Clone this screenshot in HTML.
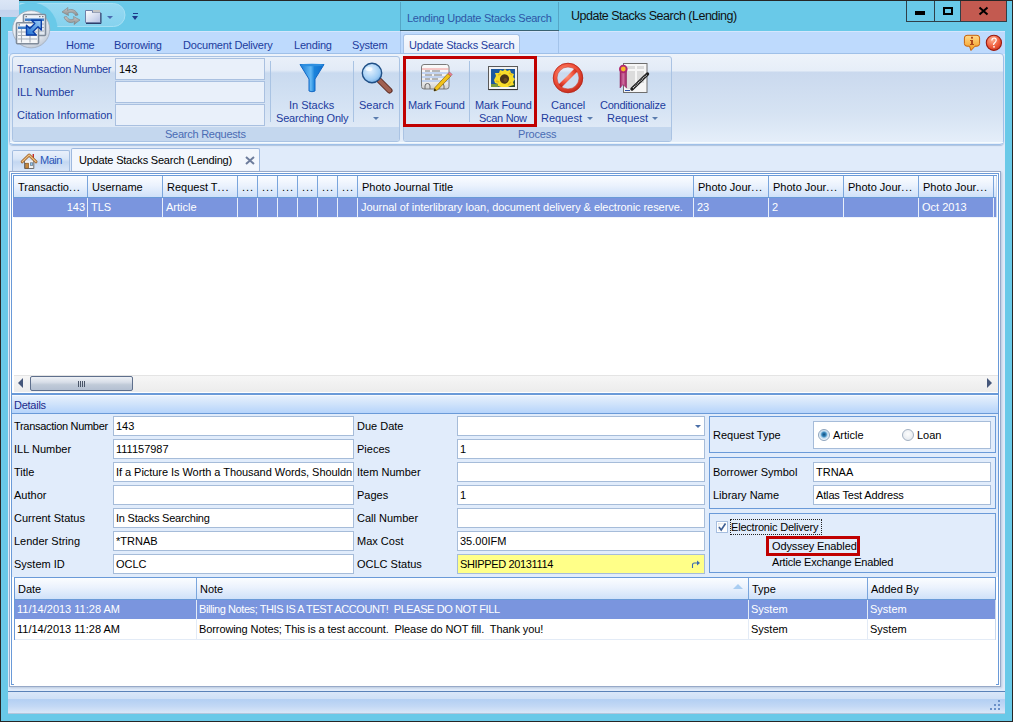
<!DOCTYPE html>
<html><head><meta charset="utf-8">
<style>
*{box-sizing:border-box;margin:0;padding:0}
html,body{width:1013px;height:722px;overflow:hidden}
body{position:relative;background:#69c9e8;font-family:"Liberation Sans",sans-serif;font-size:11px;color:#000}
.a{position:absolute}
.t{position:absolute;white-space:nowrap;line-height:13px}
svg{position:absolute;overflow:visible}
</style></head><body>
<div class="a" style="left:0px;top:0px;width:19px;height:17px;background:linear-gradient(#dbe6f6 0,#d3e0f3 55%,#c2d3ee 60%,#c6d6ef)"></div>
<div class="a" style="left:19px;top:0px;width:994px;height:1px;background:#262626"></div>
<div class="a" style="left:0px;top:17px;width:1px;height:705px;background:#262626"></div>
<div class="a" style="left:1012px;top:0px;width:1px;height:722px;background:#262626"></div>
<div class="a" style="left:0px;top:721px;width:1013px;height:1px;background:#262626"></div>
<div class="t" style="left:571px;top:8px;font-size:12.5px;line-height:16px;letter-spacing:-0.5px;color:#111">Update Stacks Search (Lending)</div>
<div class="a" style="left:400px;top:30px;width:159px;height:1px;background:#3a6272"></div>
<div class="t" style="left:407px;top:12px;letter-spacing:-0.25px;color:#2d56a6">Lending Update Stacks Search</div>
<div class="a" style="left:906px;top:1px;width:101px;height:21px;border:1px solid #2f3f48;border-top:none;background:#69c9e8"></div>
<div class="a" style="left:934px;top:1px;width:1px;height:20px;background:#2f3f48"></div>
<div class="a" style="left:960px;top:1px;width:46px;height:20px;background:#c35a50"></div>
<div class="a" style="left:960px;top:1px;width:1px;height:20px;background:#2f3f48"></div>
<div class="a" style="left:915px;top:11px;width:10px;height:4px;background:#000"></div>
<div class="a" style="left:943px;top:7px;width:10px;height:8px;border:2px solid #000"></div>
<svg style="left:978px;top:6px" width="11" height="10" viewBox="0 0 11 10"><path d="M1.5 1.5 L9.5 8.5 M9.5 1.5 L1.5 8.5" stroke="#000" stroke-width="2"/></svg>
<div class="a" style="left:8px;top:31px;width:997px;height:683px;background:#e0ebfa"></div>
<div class="a" style="left:8px;top:31px;width:997px;height:23px;background:#bedafd;border-top:1px solid #d4e6fd"></div>
<svg style="left:19px;top:1px;overflow:hidden" width="121" height="30" viewBox="19 1 121 30"><defs><linearGradient id="pill" x1="0" y1="0" x2="0" y2="1"><stop offset="0" stop-color="#96d9f2"/><stop offset="1" stop-color="#86d2ee"/></linearGradient></defs><path d="M20 3.5 H113.5 A11.5 11.5 0 0 1 113.5 26.5 H20 Z" fill="url(#pill)" stroke="#a6e0f4" stroke-width="1"/><circle cx="31" cy="29" r="26.5" fill="#69c9e8"/></svg>
<svg style="left:60px;top:6px" width="22" height="20" viewBox="0 0 22 20">
<defs><linearGradient id="rg" x1="0" y1="0" x2="0" y2="1"><stop offset="0" stop-color="#c8c8c8"/><stop offset="1" stop-color="#8c8c8c"/></linearGradient></defs>
<path d="M18 9 C16.5 4, 11 2, 7.5 4.5 L8 1.5 L2 6 L8.5 9.5 L8 7.2 C11 5.5, 14 6.5, 15.5 9.5 Z" fill="url(#rg)" stroke="#7e7e7e" stroke-width="0.6" stroke-linejoin="round"/>
<path d="M4 11 C5.5 16, 11 18, 14.5 15.5 L14 18.5 L20 14 L13.5 10.5 L14 12.8 C11 14.5, 8 13.5, 6.5 10.5 Z" fill="url(#rg)" stroke="#7e7e7e" stroke-width="0.6" stroke-linejoin="round"/>
</svg>
<svg style="left:85px;top:10px" width="17" height="14" viewBox="0 0 17 14">
<defs><linearGradient id="fg" x1="0" y1="0" x2="1" y2="1"><stop offset="0" stop-color="#ffffff"/><stop offset="1" stop-color="#b4c0e2"/></linearGradient></defs>
<path d="M0.5 0.5 H7.5 V2.5 H15.5 V12.5 H0.5 Z" fill="url(#fg)" stroke="#7080a8" stroke-width="1"/>
<rect x="8" y="0" width="7" height="2.5" fill="#c4c4c4"/>
<path d="M1 13.5 H16 V3" fill="none" stroke="#2c3e6a" stroke-width="1"/>
</svg>
<div class="a" style="left:107px;top:16px;width:0;height:0;border-left:3px solid transparent;border-right:3px solid transparent;border-top:3px solid #4a6cb0"></div>
<div class="a" style="left:133px;top:13px;width:5px;height:1px;background:#1e3a8a"></div>
<div class="a" style="left:132px;top:16px;width:0;height:0;border-left:3.5px solid transparent;border-right:3.5px solid transparent;border-top:4px solid #1e3a8a"></div>
<svg style="left:10px;top:5px" width="45" height="45" viewBox="0 0 45 45">
<defs>
<radialGradient id="ab" cx="0.4" cy="0.3" r="0.8"><stop offset="0" stop-color="#ffffff"/><stop offset="0.6" stop-color="#e8ecf2"/><stop offset="1" stop-color="#b5c0cf"/></radialGradient>
<linearGradient id="arr" x1="0" y1="1" x2="1" y2="0"><stop offset="0" stop-color="#1f6fd0"/><stop offset="1" stop-color="#9ccdf8"/></linearGradient>
</defs>
<circle cx="21.2" cy="24.3" r="18.6" fill="url(#ab)" stroke="#a0abba" stroke-width="0.8"/>
<rect x="13.5" y="9.5" width="22" height="21" rx="1" fill="#e2e8f1" stroke="#808c9b" stroke-width="1.6"/>
<rect x="14.5" y="10.5" width="20" height="2.5" fill="#eef2f8"/>
<path d="M15.5 11.7 H17 M29 11.7 H30.5 M32 11.7 H33.5" stroke="#555" stroke-width="0.9"/>
<rect x="15" y="13.5" width="19" height="2.5" fill="#3d7cc8"/>
<path d="M15 19 H34 M15 22.5 H34 M15 26 H34 M19 16 V30 M28 16 V30" stroke="#a4acb6" stroke-width="1"/>
<rect x="6.5" y="17.8" width="22" height="21" rx="1" fill="#f4f6f9" stroke="#808c9b" stroke-width="1.6"/>
<path d="M8.5 19.9 H10" stroke="#555" stroke-width="0.9"/>
<rect x="8" y="21.5" width="19" height="2.5" fill="#3d7cc8"/>
<path d="M8 27 H27 M8 30.5 H27 M8 34 H27 M11.5 24 V37.5 M20 24 V37.5" stroke="#a4acb6" stroke-width="1.1"/>
<path d="M21.5 15.2 H31.3 V25 L28 21.7 L23 26.7 L26.3 30 H16.5 V20.2 L19.8 23.5 L24.8 18.5 Z" fill="url(#arr)" stroke="#0b3ea8" stroke-width="1.4" stroke-linejoin="round"/>
</svg>
<div class="a" style="left:400px;top:2px;width:1px;height:28px;background:#55a6c6"></div>
<div class="a" style="left:558px;top:2px;width:1px;height:28px;background:#55a6c6"></div>
<div class="a" style="left:400px;top:31px;width:1px;height:23px;background:#a3c3ea"></div>
<div class="a" style="left:558px;top:31px;width:1px;height:23px;background:#a3c3ea"></div>
<div class="t" style="left:66px;top:39px;color:#1c3c9e;letter-spacing:-0.2px">Home</div>
<div class="t" style="left:114px;top:39px;color:#1c3c9e;letter-spacing:-0.2px">Borrowing</div>
<div class="t" style="left:183px;top:39px;color:#1c3c9e;letter-spacing:-0.2px">Document Delivery</div>
<div class="t" style="left:294px;top:39px;color:#1c3c9e;letter-spacing:-0.2px">Lending</div>
<div class="t" style="left:352px;top:39px;color:#1c3c9e;letter-spacing:-0.2px">System</div>
<div class="a" style="left:403px;top:34px;width:117px;height:21px;background:linear-gradient(#f6f9fd,#e6eef9);border:1px solid #a6c2e6;border-bottom:none;border-radius:3px 3px 0 0"></div>
<div class="t" style="left:409px;top:39px;color:#1c3c9e;letter-spacing:-0.2px">Update Stacks Search</div>
<div class="a" style="left:9px;top:53px;width:995px;height:92px;border:1px solid #9fc0e8;border-radius:4px;box-shadow:0 1px 1px #aec4de;background:linear-gradient(#eef3fa 0,#e6eef8 17px,#cad9ee 18px,#d6e3f3 60px,#e6effa 90px)"></div>
<div class="a" style="left:10px;top:142px;width:993px;height:1px;background:#f4fbff"></div>
<div class="a" style="left:12px;top:56px;width:388px;height:86px;border:1px solid #aac3e3;border-radius:3px;background:linear-gradient(#e9f0f9 0,#e3ebf7 13px,#c9daef 16px,#d5e3f4 50px,#dfe9f6 70px);overflow:hidden"><div style="position:absolute;left:0;right:0;top:70px;bottom:0;background:#c4d7ee"></div></div>
<div class="a" style="left:403px;top:56px;width:269px;height:86px;border:1px solid #aac3e3;border-radius:3px;background:linear-gradient(#e9f0f9 0,#e3ebf7 13px,#c9daef 16px,#d5e3f4 50px,#dfe9f6 70px);overflow:hidden"><div style="position:absolute;left:0;right:0;top:70px;bottom:0;background:#c4d7ee"></div></div>
<div class="t" style="left:165px;top:128px;color:#4a6cb4;letter-spacing:-0.25px">Search Requests</div>
<div class="t" style="left:518px;top:128px;color:#4a6cb4;letter-spacing:-0.2px">Process</div>
<div class="t" style="left:17px;top:63px;color:#1c3c9e;letter-spacing:-0.28px">Transaction Number</div>
<div class="t" style="left:17px;top:86px;color:#1c3c9e">ILL Number</div>
<div class="t" style="left:17px;top:109px;color:#1c3c9e">Citation Information</div>
<div class="a" style="left:115px;top:58px;width:150px;height:22px;background:#e9f0fa;border:1px solid #a9c0e0"></div>
<div class="a" style="left:115px;top:81px;width:150px;height:22px;background:#e9f0fa;border:1px solid #a9c0e0"></div>
<div class="a" style="left:115px;top:104px;width:150px;height:22px;background:#e9f0fa;border:1px solid #a9c0e0"></div>
<div class="t" style="left:119px;top:63px;">143</div>
<div class="a" style="left:270px;top:61px;width:1px;height:61px;background:#a9c3e3"></div>
<div class="a" style="left:353px;top:61px;width:1px;height:61px;background:#a9c3e3"></div>
<div class="a" style="left:469px;top:61px;width:1px;height:61px;background:#a9c3e3"></div>
<svg style="left:299px;top:63px" width="26" height="30" viewBox="0 0 26 30">
<defs><linearGradient id="fun" x1="0" x2="1"><stop offset="0" stop-color="#1479d6"/><stop offset="0.45" stop-color="#62b8f4"/><stop offset="0.6" stop-color="#1a83db"/><stop offset="1" stop-color="#0f6fcf"/></linearGradient></defs>
<path d="M1 1.5 H25 L16 16 V28 Q13 29.5 10 28 V16 Z" fill="url(#fun)" stroke="#1267c4" stroke-width="1"/>
<ellipse cx="13" cy="2" rx="12" ry="1.3" fill="#2d8fe0"/>
</svg>
<div class="t" style="left:289px;top:99px;color:#1c3c9e">In Stacks</div>
<div class="t" style="left:276px;top:112px;color:#1c3c9e;letter-spacing:-0.2px">Searching Only</div>
<svg style="left:360px;top:61px" width="34" height="33" viewBox="0 0 34 33">
<defs><radialGradient id="mg" cx="0.4" cy="0.35" r="0.7"><stop offset="0" stop-color="#e6f3ff"/><stop offset="0.7" stop-color="#9fcdf5"/><stop offset="1" stop-color="#6fa9e0"/></radialGradient></defs>
<line x1="19.5" y1="19.5" x2="29.5" y2="29.5" stroke="#5b2a22" stroke-width="6" stroke-linecap="round"/>
<line x1="19.5" y1="19.5" x2="29.5" y2="29.5" stroke="#a06050" stroke-width="4" stroke-linecap="round"/>
<circle cx="12" cy="12" r="9.7" fill="url(#mg)" stroke="#1f4f86" stroke-width="1.4"/>
<ellipse cx="9" cy="8" rx="3.5" ry="2" fill="#fff" opacity="0.7"/>
</svg>
<div class="t" style="left:359px;top:99px;color:#1c3c9e">Search</div>
<svg style="left:420px;top:63px" width="34" height="30" viewBox="0 0 34 30">
<defs><linearGradient id="card" x1="0" y1="0" x2="0" y2="1"><stop offset="0" stop-color="#fafafa"/><stop offset="0.7" stop-color="#ececec"/><stop offset="1" stop-color="#cfcfcf"/></linearGradient></defs>
<rect x="1.5" y="1.5" width="27.5" height="24.5" rx="2.5" fill="url(#card)" stroke="#7a7a7a" stroke-width="1"/>
<line x1="2" y1="6" x2="28.5" y2="6" stroke="#f08a8a" stroke-width="0.9"/>
<line x1="2" y1="10" x2="28.5" y2="10" stroke="#8ab0f0" stroke-width="0.9"/>
<line x1="2" y1="14" x2="28.5" y2="14" stroke="#8ab0f0" stroke-width="0.9"/>
<line x1="2" y1="18" x2="28.5" y2="18" stroke="#8ab0f0" stroke-width="0.9"/>
<path d="M5 8 H10 M12 8 H20 M5 12 H12 M14 12 H22 M5 16 H10 M12 16 H18" stroke="#777" stroke-width="1"/>
<path d="M5 26 V23 A2.5 2.5 0 0 1 10 23 V26 M19 26 V23 A2.5 2.5 0 0 1 24 23 V26" fill="none" stroke="#6a6a6a" stroke-width="1"/>
<path d="M15 24.5 L28 10.5 L30.8 13 L17.5 27 L14 28 Z" fill="#f2c21a" stroke="#8a6500" stroke-width="0.7"/>
<path d="M28 10.5 L29.5 9 L32.3 11.5 L30.8 13 Z" fill="#e8808e" stroke="#a05060" stroke-width="0.5"/>
<path d="M14 28 L14.6 25.6 L16.4 27.2 Z" fill="#111"/>
</svg>
<div class="t" style="left:408px;top:99px;color:#1c3c9e;letter-spacing:-0.2px">Mark Found</div>
<svg style="left:487px;top:65px" width="32" height="26" viewBox="0 0 32 26">
<defs><linearGradient id="frm" x1="0" y1="0" x2="0" y2="1"><stop offset="0" stop-color="#f2f2f2"/><stop offset="1" stop-color="#d2d2d2"/></linearGradient></defs>
<rect x="1.5" y="1.5" width="29" height="23" fill="#f4f4f4" stroke="#5a5a5a" stroke-width="1"/>
<line x1="1.5" y1="24.6" x2="30.5" y2="24.6" stroke="#333" stroke-width="1"/>
<rect x="4" y="4" width="24" height="18" fill="#1b58a0"/>
<rect x="4" y="19" width="7" height="3" fill="#7a9a3a"/>
<path d="M22 22 L28 15 L28 22 Z" fill="#2a4a30"/>
<path d="M7 15 L9 11 L8 8 L12 8 L13 5 L16 6 L18 4 L20 6 L23 5 L24 8 L27 9 L26 12 L28 14 L26 17 L27 20 L23 21 L21 22 L17 22 L14 22 L11 21 L11 19 L8 18 Z" fill="#f7dc2a"/>
<path d="M11 10 L14 9 M22 8 L25 10 M9 16 L12 17 M24 17 L21 20" stroke="#e8b818" stroke-width="1.5"/>
<ellipse cx="17.5" cy="14" rx="4.5" ry="4.8" transform="rotate(25 17.5 14)" fill="#4a3418"/>
<ellipse cx="18.5" cy="15" rx="2" ry="2" fill="#6a4a20"/>
</svg>
<div class="t" style="left:475px;top:99px;color:#1c3c9e;letter-spacing:-0.2px">Mark Found</div>
<div class="t" style="left:479px;top:112px;color:#1c3c9e;letter-spacing:-0.3px">Scan Now</div>
<svg style="left:552px;top:62px" width="32" height="32" viewBox="0 0 32 32">
<defs><radialGradient id="cg" cx="0.4" cy="0.35" r="0.75"><stop offset="0" stop-color="#ff9c80"/><stop offset="0.6" stop-color="#f0503a"/><stop offset="1" stop-color="#c42a1c"/></radialGradient></defs>
<circle cx="16" cy="16" r="13" fill="none" stroke="url(#cg)" stroke-width="4"/>
<circle cx="16" cy="16" r="14.8" fill="none" stroke="#b42a1e" stroke-width="0.8"/>
<circle cx="16" cy="16" r="11" fill="none" stroke="#c83a28" stroke-width="0.6"/>
<line x1="24" y1="8" x2="8" y2="24" stroke="url(#cg)" stroke-width="4"/>
</svg>
<div class="t" style="left:551px;top:99px;color:#1c3c9e">Cancel</div>
<div class="t" style="left:541px;top:112px;color:#1c3c9e">Request</div>
<svg style="left:617px;top:62px" width="34" height="32" viewBox="0 0 34 32">
<rect x="6.5" y="1.5" width="23.5" height="29" fill="#f6f6f6" stroke="#6e6e6e" stroke-width="1"/>
<g fill="#dcdcdc"><rect x="9" y="4" width="9" height="3"/><rect x="20" y="4" width="7" height="3"/><rect x="9" y="9" width="9" height="18"/><rect x="20" y="9" width="7" height="12"/></g>
<defs><linearGradient id="rib" x1="0" x2="1"><stop offset="0" stop-color="#9a2060"/><stop offset="0.5" stop-color="#d070a0"/><stop offset="1" stop-color="#9a2060"/></linearGradient></defs>
<path d="M3 7 V26 L6 22.5 L9.5 26 V7 Z" fill="url(#rib)" stroke="#8a1c58" stroke-width="0.5"/>
<circle cx="6.3" cy="7" r="4.3" fill="#b02870"/>
<circle cx="6.3" cy="7" r="2.4" fill="#f6b82a"/>
<line x1="15" y1="27" x2="30.5" y2="12" stroke="#1e1e1e" stroke-width="3.4" stroke-linecap="round"/>
<line x1="16" y1="26" x2="29.5" y2="13" stroke="#e8e8e8" stroke-width="1.2" stroke-dasharray="1 0.8"/>
<line x1="8" y1="28.5" x2="13" y2="28.5" stroke="#2a50a8" stroke-width="1"/>
</svg>
<div class="t" style="left:600px;top:99px;color:#1c3c9e;letter-spacing:-0.25px">Conditionalize</div>
<div class="t" style="left:607px;top:112px;color:#1c3c9e">Request</div>
<div class="a" style="left:373px;top:117px;width:0;height:0;border-left:3px solid transparent;border-right:3px solid transparent;border-top:3px solid #5a7cae"></div>
<div class="a" style="left:587px;top:117px;width:0;height:0;border-left:3px solid transparent;border-right:3px solid transparent;border-top:3px solid #5a7cae"></div>
<div class="a" style="left:652px;top:117px;width:0;height:0;border-left:3px solid transparent;border-right:3px solid transparent;border-top:3px solid #5a7cae"></div>
<div class="a" style="left:403px;top:56px;width:134px;height:71px;border:3px solid #c00000"></div>
<svg style="left:963px;top:34px" width="18" height="18" viewBox="0 0 18 18">
<defs><linearGradient id="ig" x1="0" y1="0" x2="0" y2="1"><stop offset="0" stop-color="#ffd98a"/><stop offset="1" stop-color="#f39a1c"/></linearGradient></defs>
<path d="M4 1.3 H14 Q16.6 1.3 16.6 4 V9.5 Q16.6 12.2 14 12.2 H12 L8 16.5 L6.5 12.2 H4 Q1.4 12.2 1.4 9.5 V4 Q1.4 1.3 4 1.3 Z" fill="url(#ig)" stroke="#c8620c" stroke-width="1"/>
<rect x="8" y="2.8" width="2" height="1.8" fill="#b0481a"/><path d="M7 6 H10 V10 H11 V11 H7 V10 H8 V7 H7 Z" fill="#b0481a"/>
</svg>
<svg style="left:985px;top:34px" width="18" height="18" viewBox="0 0 18 18">
<defs><radialGradient id="hg" cx="0.4" cy="0.3" r="0.8"><stop offset="0" stop-color="#ffb090"/><stop offset="0.6" stop-color="#ee5a3a"/><stop offset="1" stop-color="#c4301a"/></radialGradient></defs>
<circle cx="8.9" cy="8.8" r="7.6" fill="url(#hg)" stroke="#9a1a10" stroke-width="1.1"/>
<path d="M6.8 6.5 Q7 4 9.3 4 Q11.3 4.2 11.2 6.2 Q11 7.8 9.5 9 Q8.6 9.8 8.5 11" fill="none" stroke="#fff" stroke-width="1.2"/>
<circle cx="9" cy="12.8" r="0.9" fill="#fff"/>
</svg>
<div class="a" style="left:12px;top:150px;width:58px;height:21px;border:1px solid #a3bde0;border-bottom:none;border-radius:2px 2px 0 0;background:linear-gradient(#e9f0fb,#d9e6f7 40%,#c3d7f1 55%,#d9e6f8)"></div>
<svg style="left:21px;top:153px" width="16" height="16" viewBox="0 0 16 16">
<path d="M3.5 7.5 V15.5 H12.8 V7.5" fill="#f2f2f2" stroke="#6e6e6e" stroke-width="1"/>
<rect x="11.6" y="1" width="1.3" height="4" fill="#c41a14"/>
<path d="M1.2 8.8 L8.1 2 L15 8.8" fill="none" stroke="#9a6028" stroke-width="3" stroke-linejoin="round" stroke-linecap="round"/>
<path d="M1.2 8.8 L8.1 2 L15 8.8" fill="none" stroke="#f0c080" stroke-width="1.2" stroke-linejoin="round" stroke-linecap="round"/>
<rect x="4.6" y="10.2" width="3" height="5" fill="#c8883a" stroke="#7a4a1a" stroke-width="0.6"/>
<rect x="9.3" y="9.8" width="2.4" height="2.6" fill="#90c8f4" stroke="#5a6a7a" stroke-width="0.6"/>
</svg>
<div class="t" style="left:40px;top:154px;color:#2a56b8;letter-spacing:-0.5px">Main</div>
<div class="a" style="left:71px;top:148px;width:189px;height:24px;border:1px solid #9fb9de;border-bottom:none;border-radius:2px 2px 0 0;background:#f3f7fd"></div>
<div class="t" style="left:79px;top:154px;letter-spacing:-0.2px">Update Stacks Search (Lending)</div>
<svg style="left:245px;top:156px" width="10" height="9" viewBox="0 0 10 9"><path d="M1 1 L9 8 M9 1 L1 8" stroke="#6e7d9c" stroke-width="2"/></svg>
<div class="a" style="left:9px;top:171px;width:992px;height:516px;border:1px solid #97a9c8;background:#fff;box-shadow:1px 1px 2px #b9c8dc"></div>
<div class="a" style="left:11px;top:173px;width:988px;height:512px;border:1px solid #6a9ad8;background:#fff"></div>
<div class="a" style="left:13px;top:175px;width:984px;height:23px;border-top:1px solid #6a9ad8;border-left:1px solid #6a9ad8;border-bottom:1px solid #6a9ad8;background:linear-gradient(#fbfdff,#ebf2fd 45%,#cfe1f9 100%)"></div>
<div class="a" style="left:13px;top:198px;width:984px;height:19px;background:#7a95de"></div>
<div class="a" style="left:14px;top:217px;width:983px;height:1px;background:#eef3fb"></div>
<div class="a" style="left:87px;top:176px;width:1px;height:21px;background:#7aa5dc"></div>
<div class="a" style="left:87px;top:198px;width:1px;height:19px;background:#e8effa"></div>
<div class="a" style="left:162px;top:176px;width:1px;height:21px;background:#7aa5dc"></div>
<div class="a" style="left:162px;top:198px;width:1px;height:19px;background:#e8effa"></div>
<div class="a" style="left:237px;top:176px;width:1px;height:21px;background:#7aa5dc"></div>
<div class="a" style="left:237px;top:198px;width:1px;height:19px;background:#e8effa"></div>
<div class="a" style="left:257px;top:176px;width:1px;height:21px;background:#7aa5dc"></div>
<div class="a" style="left:257px;top:198px;width:1px;height:19px;background:#e8effa"></div>
<div class="a" style="left:277px;top:176px;width:1px;height:21px;background:#7aa5dc"></div>
<div class="a" style="left:277px;top:198px;width:1px;height:19px;background:#e8effa"></div>
<div class="a" style="left:297px;top:176px;width:1px;height:21px;background:#7aa5dc"></div>
<div class="a" style="left:297px;top:198px;width:1px;height:19px;background:#e8effa"></div>
<div class="a" style="left:317px;top:176px;width:1px;height:21px;background:#7aa5dc"></div>
<div class="a" style="left:317px;top:198px;width:1px;height:19px;background:#e8effa"></div>
<div class="a" style="left:337px;top:176px;width:1px;height:21px;background:#7aa5dc"></div>
<div class="a" style="left:337px;top:198px;width:1px;height:19px;background:#e8effa"></div>
<div class="a" style="left:357px;top:176px;width:1px;height:21px;background:#7aa5dc"></div>
<div class="a" style="left:357px;top:198px;width:1px;height:19px;background:#e8effa"></div>
<div class="a" style="left:693px;top:176px;width:1px;height:21px;background:#7aa5dc"></div>
<div class="a" style="left:693px;top:198px;width:1px;height:19px;background:#e8effa"></div>
<div class="a" style="left:768px;top:176px;width:1px;height:21px;background:#7aa5dc"></div>
<div class="a" style="left:768px;top:198px;width:1px;height:19px;background:#e8effa"></div>
<div class="a" style="left:843px;top:176px;width:1px;height:21px;background:#7aa5dc"></div>
<div class="a" style="left:843px;top:198px;width:1px;height:19px;background:#e8effa"></div>
<div class="a" style="left:918px;top:176px;width:1px;height:21px;background:#7aa5dc"></div>
<div class="a" style="left:918px;top:198px;width:1px;height:19px;background:#e8effa"></div>
<div class="a" style="left:993px;top:176px;width:1px;height:21px;background:#7aa5dc"></div>
<div class="a" style="left:993px;top:198px;width:1px;height:19px;background:#e8effa"></div>
<div class="a" style="left:996px;top:176px;width:1px;height:41px;background:#c8d8ee"></div>
<div class="t" style="left:18px;top:181px;">Transactio<span style="letter-spacing:0.9px">...</span></div>
<div class="t" style="left:92px;top:181px;">Username</div>
<div class="t" style="left:167px;top:181px;">Request T<span style="letter-spacing:0.9px">...</span></div>
<div class="t" style="left:242px;top:181px;"><span style="letter-spacing:0.9px">...</span></div>
<div class="t" style="left:262px;top:181px;"><span style="letter-spacing:0.9px">...</span></div>
<div class="t" style="left:282px;top:181px;"><span style="letter-spacing:0.9px">...</span></div>
<div class="t" style="left:302px;top:181px;"><span style="letter-spacing:0.9px">...</span></div>
<div class="t" style="left:322px;top:181px;"><span style="letter-spacing:0.9px">...</span></div>
<div class="t" style="left:342px;top:181px;"><span style="letter-spacing:0.9px">...</span></div>
<div class="t" style="left:362px;top:181px;">Photo Journal Title</div>
<div class="t" style="left:698px;top:181px;">Photo Jour<span style="letter-spacing:0.9px">...</span></div>
<div class="t" style="left:773px;top:181px;">Photo Jour<span style="letter-spacing:0.9px">...</span></div>
<div class="t" style="left:848px;top:181px;">Photo Jour<span style="letter-spacing:0.9px">...</span></div>
<div class="t" style="left:923px;top:181px;">Photo Jour<span style="letter-spacing:0.9px">...</span></div>
<div class="t" style="left:62px;top:201px;color:#fff;width:23px;text-align:right">143</div>
<div class="t" style="left:91px;top:201px;color:#fff">TLS</div>
<div class="t" style="left:166px;top:201px;color:#fff">Article</div>
<div class="t" style="left:361px;top:201px;color:#fff;letter-spacing:-0.05px">Journal of interlibrary loan, document delivery &amp; electronic reserve.</div>
<div class="t" style="left:697px;top:201px;color:#fff">23</div>
<div class="t" style="left:772px;top:201px;color:#fff">2</div>
<div class="t" style="left:922px;top:201px;color:#fff">Oct 2013</div>
<div class="a" style="left:14px;top:375px;width:984px;height:17px;border-top:1px solid #e4e4e4;background:linear-gradient(#f6f6f6,#ececec)"></div>
<div class="a" style="left:14px;top:392px;width:984px;height:1px;background:#ffffff"></div>
<div class="a" style="left:18px;top:378px;width:0;height:0;border-top:5px solid transparent;border-bottom:5px solid transparent;border-right:5px solid #46577a"></div>
<div class="a" style="left:987px;top:378px;width:0;height:0;border-top:5px solid transparent;border-bottom:5px solid transparent;border-left:5px solid #46577a"></div>
<div class="a" style="left:30px;top:376px;width:103px;height:15px;border:1px solid #5e6f8c;border-radius:2px;background:linear-gradient(#eef1f6,#d8dee8 40%,#c0cad8 60%,#b4c0d2)"></div>
<div class="a" style="left:78px;top:381px;width:1px;height:6px;background:#4a5568"></div>
<div class="a" style="left:80px;top:381px;width:1px;height:6px;background:#4a5568"></div>
<div class="a" style="left:82px;top:381px;width:1px;height:6px;background:#4a5568"></div>
<div class="a" style="left:84px;top:381px;width:1px;height:6px;background:#4a5568"></div>
<div class="a" style="left:12px;top:393px;width:986px;height:2px;background:#6a9ad8"></div>
<div class="a" style="left:12px;top:395px;width:986px;height:19px;border-top:1px solid #f6faff;border-bottom:1px solid #6a9ad8;background:linear-gradient(#e6f0fd,#d3e5fb 40%,#b6d4fb)"></div>
<div class="t" style="left:14px;top:399px;color:#1c2a8c;letter-spacing:-0.25px">Details</div>
<div class="a" style="left:12px;top:414px;width:986px;height:163px;background:#e1ecfb"></div>
<div class="t" style="left:14px;top:420px;letter-spacing:-0.3px">Transaction Number</div>
<div class="a" style="left:113px;top:416px;width:241px;height:20px;background:#fff;border:1px solid #a6bcd9"></div>
<div class="t" style="left:116px;top:420px;width:236px;overflow:hidden">143</div>
<div class="t" style="left:357px;top:420px;">Due Date</div>
<div class="a" style="left:457px;top:416px;width:248px;height:20px;background:#fff;border:1px solid #a6bcd9"></div>
<div class="t" style="left:14px;top:443px;">ILL Number</div>
<div class="a" style="left:113px;top:439px;width:241px;height:20px;background:#fff;border:1px solid #a6bcd9"></div>
<div class="t" style="left:116px;top:443px;width:236px;overflow:hidden">111157987</div>
<div class="t" style="left:357px;top:443px;">Pieces</div>
<div class="a" style="left:457px;top:439px;width:248px;height:20px;background:#fff;border:1px solid #a6bcd9"></div>
<div class="t" style="left:460px;top:443px;">1</div>
<div class="t" style="left:14px;top:466px;">Title</div>
<div class="a" style="left:113px;top:462px;width:241px;height:20px;background:#fff;border:1px solid #a6bcd9"></div>
<div class="t" style="left:116px;top:466px;width:236px;overflow:hidden;letter-spacing:-0.05px">If a Picture Is Worth a Thousand Words, Shouldn</div>
<div class="t" style="left:357px;top:466px;">Item Number</div>
<div class="a" style="left:457px;top:462px;width:248px;height:20px;background:#fff;border:1px solid #a6bcd9"></div>
<div class="t" style="left:14px;top:489px;">Author</div>
<div class="a" style="left:113px;top:485px;width:241px;height:20px;background:#fff;border:1px solid #a6bcd9"></div>
<div class="t" style="left:357px;top:489px;">Pages</div>
<div class="a" style="left:457px;top:485px;width:248px;height:20px;background:#fff;border:1px solid #a6bcd9"></div>
<div class="t" style="left:460px;top:489px;">1</div>
<div class="t" style="left:14px;top:512px;">Current Status</div>
<div class="a" style="left:113px;top:508px;width:241px;height:20px;background:#fff;border:1px solid #a6bcd9"></div>
<div class="t" style="left:116px;top:512px;width:236px;overflow:hidden;letter-spacing:-0.22px">In Stacks Searching</div>
<div class="t" style="left:357px;top:512px;">Call Number</div>
<div class="a" style="left:457px;top:508px;width:248px;height:20px;background:#fff;border:1px solid #a6bcd9"></div>
<div class="t" style="left:14px;top:535px;">Lender String</div>
<div class="a" style="left:113px;top:531px;width:241px;height:20px;background:#fff;border:1px solid #a6bcd9"></div>
<div class="t" style="left:116px;top:535px;width:236px;overflow:hidden">*TRNAB</div>
<div class="t" style="left:357px;top:535px;">Max Cost</div>
<div class="a" style="left:457px;top:531px;width:248px;height:20px;background:#fff;border:1px solid #a6bcd9"></div>
<div class="t" style="left:460px;top:535px;">35.00IFM</div>
<div class="t" style="left:14px;top:558px;">System ID</div>
<div class="a" style="left:113px;top:554px;width:241px;height:20px;background:#fff;border:1px solid #a6bcd9"></div>
<div class="t" style="left:116px;top:558px;width:236px;overflow:hidden">OCLC</div>
<div class="t" style="left:357px;top:558px;">OCLC Status</div>
<div class="a" style="left:457px;top:554px;width:248px;height:20px;background:#ffff88;border:1px solid #a6bcd9"></div>
<div class="t" style="left:460px;top:558px;letter-spacing:-0.35px">SHIPPED 20131114</div>
<div class="a" style="left:695px;top:425px;width:0;height:0;border-left:3px solid transparent;border-right:3px solid transparent;border-top:3px solid #4a6fa8"></div>
<svg style="left:691px;top:560px" width="10" height="9" viewBox="0 0 10 9"><path d="M1.5 8 V5 Q1.5 3 3.5 3 H7" fill="none" stroke="#3a6ab0" stroke-width="1.1"/><path d="M6 0.5 L9 3 L6 5.5 Z" fill="#3a6ab0"/></svg>
<div class="a" style="left:709px;top:416px;width:287px;height:37px;border:1px solid #6a9ad8"></div>
<div class="t" style="left:713px;top:429px;">Request Type</div>
<div class="a" style="left:813px;top:421px;width:178px;height:28px;background:#fff;border:1px solid #a6bcd9"></div>
<div class="a" style="left:818px;top:429px;width:12px;height:12px;border-radius:50%;border:1px solid #8ea4bd;background:radial-gradient(circle at 50% 45%,#0f4a7a 0,#3b8bc0 2.2px,#b9d6ec 3.5px,#eef5fb 5px)"></div>
<div class="t" style="left:833px;top:429px;">Article</div>
<div class="a" style="left:902px;top:429px;width:12px;height:12px;border-radius:50%;border:1px solid #a3b1c2;background:radial-gradient(circle at 50% 40%,#fdfdfd,#dfe5ec)"></div>
<div class="t" style="left:917px;top:429px;">Loan</div>
<div class="a" style="left:709px;top:457px;width:287px;height:52px;border:1px solid #6a9ad8"></div>
<div class="t" style="left:713px;top:466px;">Borrower Symbol</div>
<div class="a" style="left:813px;top:462px;width:178px;height:20px;background:#fff;border:1px solid #a6bcd9"></div>
<div class="t" style="left:816px;top:466px;">TRNAA</div>
<div class="t" style="left:713px;top:489px;">Library Name</div>
<div class="a" style="left:813px;top:485px;width:178px;height:20px;background:#fff;border:1px solid #a6bcd9"></div>
<div class="t" style="left:816px;top:489px;letter-spacing:-0.15px">Atlas Test Address</div>
<div class="a" style="left:709px;top:513px;width:287px;height:60px;border:1px solid #6a9ad8"></div>
<div class="a" style="left:716px;top:521px;width:12px;height:12px;border:1px solid #a6bedf;background:#fff;box-shadow:inset 0 0 0 1px #fff,inset 1px 1px 3px #c8ccd2"></div>
<svg style="left:717px;top:522px" width="10" height="10" viewBox="0 0 10 10"><path d="M2 5 L4.2 8 L8.5 1.5" fill="none" stroke="#3e5f94" stroke-width="1.6"/></svg>
<div class="a" style="left:730px;top:519px;width:92px;height:16px;border:1px dotted #222"></div>
<div class="t" style="left:731px;top:521px;letter-spacing:-0.2px">Electronic Delivery</div>
<div class="a" style="left:766px;top:536px;width:94px;height:20px;border:3px solid #c00000"></div>
<div class="t" style="left:772px;top:540px;letter-spacing:-0.1px">Odyssey Enabled</div>
<div class="t" style="left:772px;top:556px;letter-spacing:-0.2px">Article Exchange Enabled</div>
<div class="a" style="left:14px;top:577px;width:982px;height:108px;background:#fff"></div>
<div class="a" style="left:14px;top:577px;width:982px;height:23px;border:1px solid #6a9ad8;background:linear-gradient(#fbfdff,#ebf2fd 45%,#cfe1f9 100%)"></div>
<div class="a" style="left:15px;top:600px;width:980px;height:19px;background:#7a95de"></div>
<div class="a" style="left:15px;top:639px;width:980px;height:1px;background:#e3ebf6"></div>
<div class="a" style="left:14px;top:600px;width:1px;height:40px;background:#6a9ad8"></div>
<div class="a" style="left:196px;top:578px;width:1px;height:21px;background:#7aa5dc"></div>
<div class="a" style="left:196px;top:600px;width:1px;height:40px;background:#e3ebf6"></div>
<div class="a" style="left:748px;top:578px;width:1px;height:21px;background:#7aa5dc"></div>
<div class="a" style="left:748px;top:600px;width:1px;height:40px;background:#e3ebf6"></div>
<div class="a" style="left:867px;top:578px;width:1px;height:21px;background:#7aa5dc"></div>
<div class="a" style="left:867px;top:600px;width:1px;height:40px;background:#e3ebf6"></div>
<div class="a" style="left:995px;top:600px;width:1px;height:40px;background:#c8d8ee"></div>
<div class="t" style="left:18px;top:583px;">Date</div>
<div class="t" style="left:17px;top:603px;color:#fff">11/14/2013 11:28 AM</div>
<div class="t" style="left:17px;top:623px;">11/14/2013 11:28 AM</div>
<div class="t" style="left:200px;top:583px;">Note</div>
<div class="t" style="left:199px;top:603px;color:#fff;letter-spacing:-0.42px">Billing Notes; THIS IS A TEST ACCOUNT!&nbsp; PLEASE DO NOT FILL</div>
<div class="t" style="left:199px;top:623px;;letter-spacing:-0.1px">Borrowing Notes; This is a test account.&nbsp; Please do NOT fill.&nbsp; Thank you!</div>
<div class="t" style="left:752px;top:583px;">Type</div>
<div class="t" style="left:751px;top:603px;color:#fff">System</div>
<div class="t" style="left:751px;top:623px;">System</div>
<div class="t" style="left:871px;top:583px;">Added By</div>
<div class="t" style="left:870px;top:603px;color:#fff">System</div>
<div class="t" style="left:870px;top:623px;">System</div>
<div class="a" style="left:733px;top:584px;width:0;height:0;border-left:5px solid transparent;border-right:5px solid transparent;border-bottom:5px solid #a9cdf2"></div>
<div class="a" style="left:8px;top:691px;width:997px;height:23px;border-top:1px solid #5a82b8;border-bottom:1px solid #b4c6dc;background:linear-gradient(#dae7f9 0,#cfe0f6 32%,#b3cff3 36%,#c4d9f5 70%,#dae7f8 100%)"></div>
<svg style="left:988px;top:699px" width="14" height="12" viewBox="0 0 14 12"><g fill="#6a90c8"><rect x="10" y="1" width="2" height="2"/><rect x="6" y="5" width="2" height="2"/><rect x="10" y="5" width="2" height="2"/><rect x="2" y="9" width="2" height="2"/><rect x="6" y="9" width="2" height="2"/><rect x="10" y="9" width="2" height="2"/></g></svg>
</body></html>
